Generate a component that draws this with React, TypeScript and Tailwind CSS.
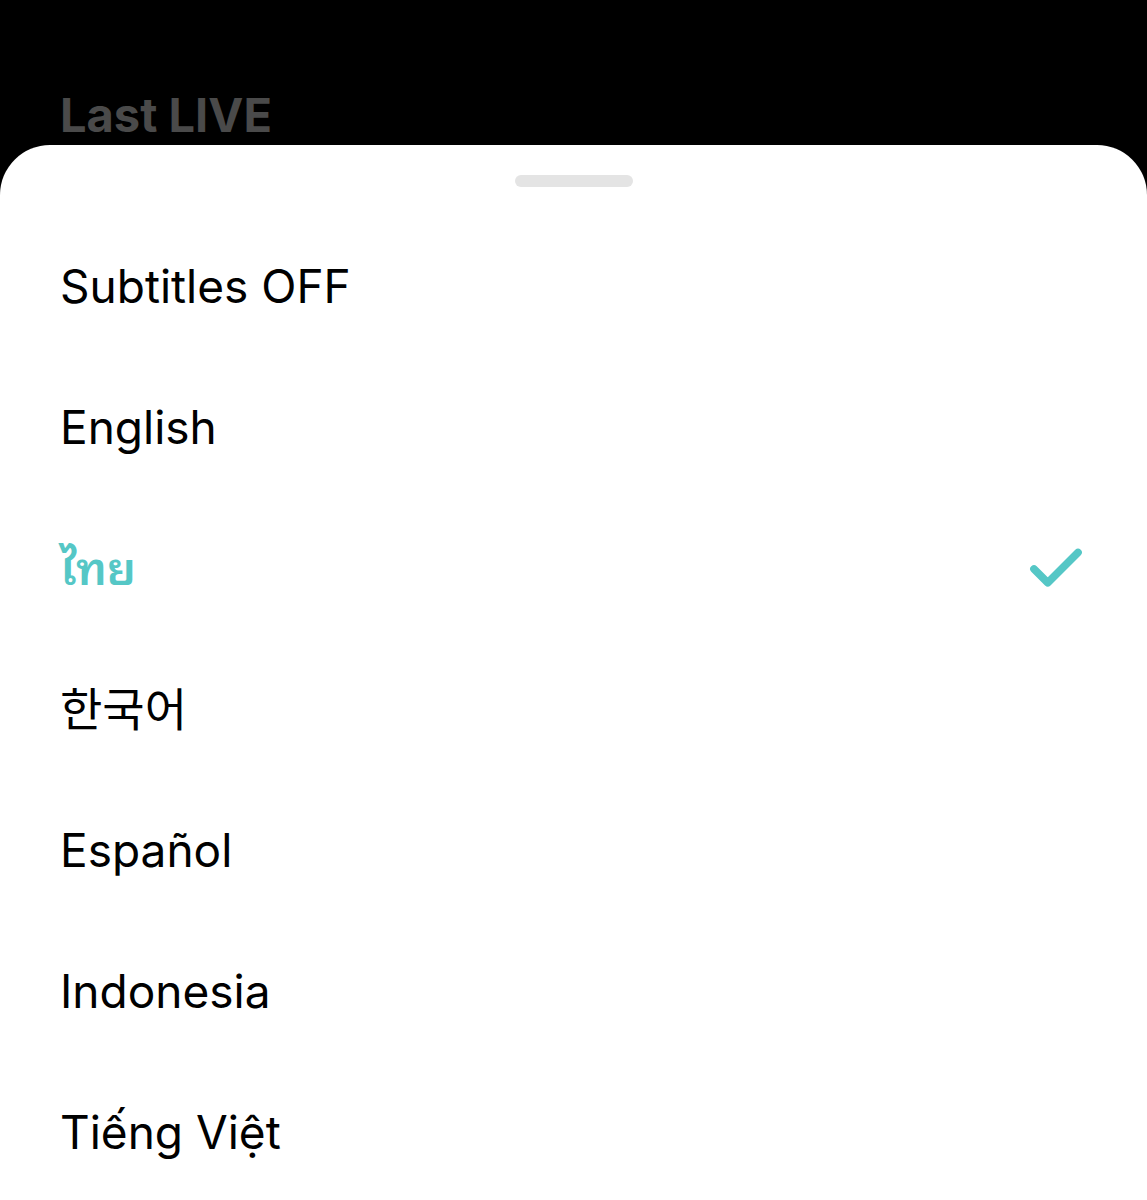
import { Check } from "lucide-react";

const languages = [
  { label: "Subtitles OFF" },
  { label: "English" },
  { label: "ไทย", selected: true },
  { label: "한국어" },
  { label: "Español" },
  { label: "Indonesia" },
  { label: "Tiếng Việt" },
];

export default function App() {
  return (
    <div
      className="w-[1147px] h-[1200px] bg-black overflow-hidden flex flex-col"
      style={{ fontFamily: 'Inter, "Noto Sans Thai Looped", "Noto Sans Thai", "Noto Sans", "Noto Sans CJK KR", sans-serif' }}
    >
      <div className="h-[145px] shrink-0 px-[60px] pt-[87px]">
        <h2 className="text-[47px] leading-[56px] font-bold text-[#4a4a4a]">Last LIVE</h2>
      </div>

      <div className="flex-1 bg-white rounded-t-[50px]">
        <div className="flex justify-center pt-[30px]">
          <div className="w-[118px] h-3 rounded-full bg-[#e4e4e4]" />
        </div>

        <ul className="pt-[29px]">
          {languages.map((lang) => (
            <li
              key={lang.label}
              className="h-[141px] flex items-center justify-between pl-[60px] pr-[58px]"
            >
              <span
                className={
                  lang.selected
                    ? "text-[46px] font-semibold text-[#55c7c6]"
                    : "text-[46px] text-black"
                }
              >
                {lang.label}
              </span>
              {lang.selected && (
                <Check className="w-[66px] h-[66px] text-[#55c7c6]" strokeWidth={2.8} />
              )}
            </li>
          ))}
        </ul>
      </div>
    </div>
  );
}
